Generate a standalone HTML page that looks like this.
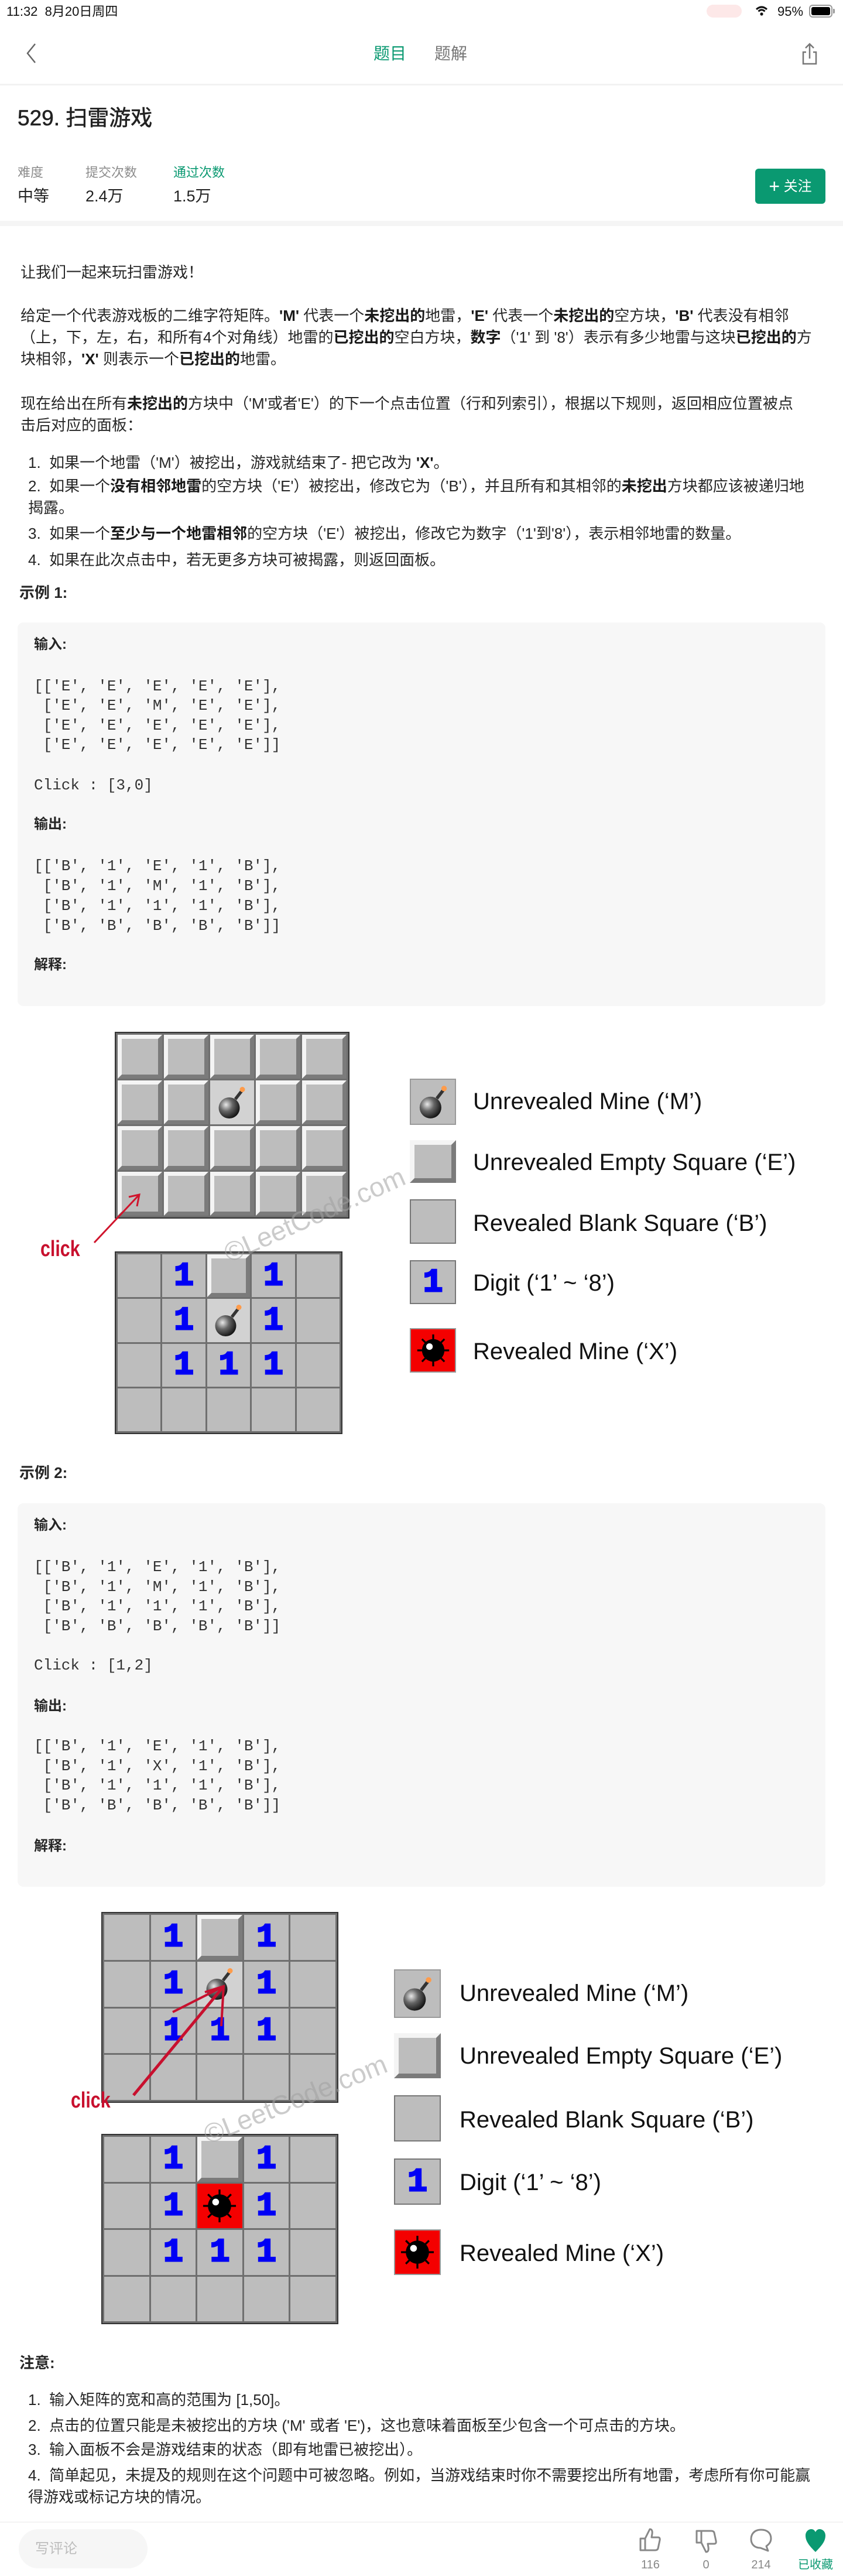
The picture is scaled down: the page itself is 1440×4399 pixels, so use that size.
<!DOCTYPE html>
<html lang="zh">
<head>
<meta charset="utf-8">
<style>
*{margin:0;padding:0;box-sizing:border-box}
html,body{width:1440px;height:4399px;background:#fff;overflow:hidden}
body{position:relative;font-family:"Liberation Sans","Noto Sans CJK SC",sans-serif;color:#262626}
.a{position:absolute;white-space:nowrap}
.t{font-size:26px;line-height:40px}
.p{font-size:26px;line-height:37px}
b{font-weight:bold;color:#1a1a1a}
.box{position:absolute;left:30px;width:1380px;background:#f7f7f7;border-radius:10px}
.lab{font-size:24px;font-weight:bold;line-height:40px;left:58px;color:#262626}
.code{font-family:"Liberation Mono","DejaVu Sans Mono",monospace;font-size:26px;left:58px;white-space:pre;color:#333}
.board{position:absolute;display:grid;background:#6f6f6f;gap:3px;padding:3px;border:2px solid #333}
.c{background:#bdbdbd;position:relative;display:flex;align-items:center;justify-content:center}
.icon{position:absolute;border:2px solid #9a9a9a;background:#bdbdbd;display:flex;align-items:center;justify-content:center}
.e{border:7px solid;border-color:#f4f4f4 #7b7b7b #7b7b7b #f4f4f4;background:#bdbdbd}
.m{background:#d2d2d2}
.x{background:#f40000}
.d{font-family:"Liberation Mono",monospace;font-weight:bold;font-size:56px;color:#0000f5;line-height:1;-webkit-text-stroke:3px #0000f5}
.lg{font-size:40px;line-height:50px;color:#111}
.click{color:#c8102e;font-size:38px;font-weight:bold;transform:scaleX(.8);transform-origin:left}
.wm{color:rgba(160,160,160,.55);font-size:46px;transform-origin:left center}
svg{display:block}
</style>
</head>
<body>

<div class="a" style="left:11px;top:6px;font-size:22px;line-height:28px;color:#111">11:32&nbsp;&nbsp;8月20日周四</div>
<div class="a" style="left:1207px;top:8px;width:60px;height:22px;border-radius:11px;background:#fde8e8"></div>
<svg class="a" style="left:1290px;top:9px" width="22" height="20" viewBox="0 0 22 20"><path d="M2 7 Q11 -1 20 7" stroke="#111" stroke-width="3" fill="none"/><path d="M5.5 10.5 Q11 5 16.5 10.5" stroke="#111" stroke-width="3" fill="none"/><circle cx="11" cy="15" r="2.6" fill="#111"/></svg>
<div class="a" style="left:1328px;top:6px;font-size:22px;line-height:28px;color:#111">95%</div>
<div class="a" style="left:1382px;top:8px;width:40px;height:22px;border:2px solid #999;border-radius:6px;padding:2px"><div style="width:100%;height:100%;background:#000;border-radius:3px"></div></div>
<div class="a" style="left:1423px;top:15px;width:3px;height:8px;background:#999;border-radius:0 2px 2px 0"></div>

<svg class="a" style="left:42px;top:72px" width="24" height="38" viewBox="0 0 24 38"><path d="M18 3 L5 19 L18 35" stroke="#666" stroke-width="2.5" fill="none"/></svg>
<div class="a" style="left:638px;top:74px;font-size:28px;line-height:36px;color:#0a9971">题目</div>
<div class="a" style="left:742px;top:74px;font-size:28px;line-height:36px;color:#777">题解</div>
<svg class="a" style="left:1368px;top:72px" width="30" height="40" viewBox="0 0 30 40"><path d="M15 28 V3 M8 10 L15 3 L22 10" stroke="#777" stroke-width="2.5" fill="none"/><path d="M9 17 H4 V37 H26 V17 H21" stroke="#777" stroke-width="2.5" fill="none"/></svg>
<div class="a" style="left:0;top:143px;width:1440px;height:3px;background:#f2f2f2"></div>

<div class="a" style="left:30px;top:180px;font-size:37px;line-height:44px;color:#222;-webkit-text-stroke:0.6px #222">529. 扫雷游戏</div>
<div class="a" style="left:30px;top:281px;font-size:22px;line-height:28px;color:#8c8c8c">难度</div>
<div class="a" style="left:146px;top:281px;font-size:22px;line-height:28px;color:#8c8c8c">提交次数</div>
<div class="a" style="left:296px;top:281px;font-size:22px;line-height:28px;color:#0a9971">通过次数</div>
<div class="a" style="left:30px;top:318px;font-size:27px;line-height:34px;color:#222">中等</div>
<div class="a" style="left:146px;top:318px;font-size:27px;line-height:34px;color:#222">2.4万</div>
<div class="a" style="left:296px;top:318px;font-size:27px;line-height:34px;color:#222">1.5万</div>
<div class="a" style="left:1290px;top:288px;width:120px;height:60px;background:#0a9971;border-radius:6px;color:#fff;font-size:24px;line-height:60px;text-align:center"><span style="font-size:32px;vertical-align:-3px">+</span> 关注</div>
<div class="a" style="left:0;top:377px;width:1440px;height:9px;background:#f5f5f5"></div>

<div class="a t" style="left:35px;top:445px">让我们一起来玩扫雷游戏！</div>
<div class="a p" style="left:35px;top:521px">给定一个代表游戏板的二维字符矩阵。<b>'M'</b> 代表一个<b>未挖出的</b>地雷，<b>'E'</b> 代表一个<b>未挖出的</b>空方块，<b>'B'</b> 代表没有相邻<br>（上，下，左，右，和所有4个对角线）地雷的<b>已挖出的</b>空白方块，<b>数字</b>（'1' 到 '8'）表示有多少地雷与这块<b>已挖出的</b>方<br>块相邻，<b>'X'</b> 则表示一个<b>已挖出的</b>地雷。</div>
<div class="a p" style="left:35px;top:671px">现在给出在所有<b>未挖出的</b>方块中（'M'或者'E'）的下一个点击位置（行和列索引），根据以下规则，返回相应位置被点<br>击后对应的面板：</div>
<div class="a t" style="left:48px;top:770px">1.&nbsp; 如果一个地雷（'M'）被挖出，游戏就结束了- 把它改为 <b>'X'</b>。</div>
<div class="a p" style="left:48px;top:812px">2.&nbsp; 如果一个<b>没有相邻地雷</b>的空方块（'E'）被挖出，修改它为（'B'），并且所有和其相邻的<b>未挖出</b>方块都应该被递归地<br>揭露。</div>
<div class="a t" style="left:48px;top:891px">3.&nbsp; 如果一个<b>至少与一个地雷相邻</b>的空方块（'E'）被挖出，修改它为数字（'1'到'8'），表示相邻地雷的数量。</div>
<div class="a t" style="left:48px;top:936px">4.&nbsp; 如果在此次点击中，若无更多方块可被揭露，则返回面板。</div>
<div class="a t" style="left:33px;top:992px;font-weight:bold">示例 1:</div>

<div class="box" style="top:1063px;height:655px"></div>
<div class="a lab" style="top:1081px">输入:</div>
<div class="a code" style="top:1156px;line-height:33.3px">[['E', 'E', 'E', 'E', 'E'],
 ['E', 'E', 'M', 'E', 'E'],
 ['E', 'E', 'E', 'E', 'E'],
 ['E', 'E', 'E', 'E', 'E']]</div>
<div class="a code" style="top:1324px;line-height:34px">Click : [3,0]</div>
<div class="a lab" style="top:1388px">输出:</div>
<div class="a code" style="top:1462px;line-height:34px">[['B', '1', 'E', '1', 'B'],
 ['B', '1', 'M', '1', 'B'],
 ['B', '1', '1', '1', 'B'],
 ['B', 'B', 'B', 'B', 'B']]</div>
<div class="a lab" style="top:1628px">解释:</div>

<div class="board" style="left:196px;top:1762px;width:401px;height:319px;grid-template-columns:repeat(5,1fr);grid-template-rows:repeat(4,1fr)">
<div class="c e"></div><div class="c e"></div><div class="c e"></div><div class="c e"></div><div class="c e"></div>
<div class="c e"></div><div class="c e"></div><div class="c m"><svg width="60" height="66" viewBox="0 0 40 44"><defs><radialGradient id="bg1" cx=".35" cy=".35" r=".7"><stop offset="0" stop-color="#e8e8e8"/><stop offset=".45" stop-color="#666"/><stop offset="1" stop-color="#111"/></radialGradient></defs><circle cx="17" cy="28" r="12" fill="url(#bg1)"/><path d="M24 18 L31 9" stroke="#333" stroke-width="3.5"/><circle cx="32" cy="7" r="3" fill="#ff9b4a"/></svg></div><div class="c e"></div><div class="c e"></div>
<div class="c e"></div><div class="c e"></div><div class="c e"></div><div class="c e"></div><div class="c e"></div>
<div class="c e"></div><div class="c e"></div><div class="c e"></div><div class="c e"></div><div class="c e"></div>
</div>
<div class="board" style="left:196px;top:2137px;width:389px;height:312px;grid-template-columns:repeat(5,1fr);grid-template-rows:repeat(4,1fr)">
<div class="c"></div><div class="c d">1</div><div class="c e"></div><div class="c d">1</div><div class="c"></div>
<div class="c"></div><div class="c d">1</div><div class="c m"><svg width="60" height="66" viewBox="0 0 40 44"><circle cx="17" cy="28" r="12" fill="url(#bg1)"/><path d="M24 18 L31 9" stroke="#333" stroke-width="3.5"/><circle cx="32" cy="7" r="3" fill="#ff9b4a"/></svg></div><div class="c d">1</div><div class="c"></div>
<div class="c"></div><div class="c d">1</div><div class="c d">1</div><div class="c d">1</div><div class="c"></div>
<div class="c"></div><div class="c"></div><div class="c"></div><div class="c"></div><div class="c"></div>
</div>
<div class="a click" style="left:69px;top:2112px">click</div>
<svg class="a" style="left:150px;top:2030px" width="100" height="100" viewBox="0 0 100 100"><path d="M11 92 L88 10 M70 14 L88 10 L84 30" stroke="#d0142c" stroke-width="3" fill="none"/></svg>
<div class="a wm" style="left:385px;top:2115px;transform:rotate(-24deg)">©LeetCode.com</div>

<div class="icon" style="left:700px;top:1842px;width:79px;height:79px"><svg width="62" height="68" viewBox="0 0 40 44"><circle cx="17" cy="28" r="12" fill="url(#bg1)"/><path d="M24 18 L31 9" stroke="#333" stroke-width="3.5"/><circle cx="32" cy="7" r="3" fill="#ff9b4a"/></svg></div>
<div class="icon e" style="left:700px;top:1947px;width:79px;height:73px;border-width:8px"></div>
<div class="icon" style="left:700px;top:2048px;width:79px;height:76px;border-color:#777"></div>
<div class="icon d" style="left:700px;top:2152px;width:79px;height:75px;border-color:#777">1</div>
<div class="icon x" style="left:700px;top:2268px;width:79px;height:76px;border-color:#999"><svg width="64" height="64" viewBox="0 0 40 40"><path d="M20 3V37M3 20H37M8 8L32 32M32 8L8 32" stroke="#000" stroke-width="2"/><circle cx="20" cy="20" r="12" fill="#000"/><circle cx="16" cy="16" r="3.5" fill="#fff"/></svg></div>
<div class="a lg" style="left:808px;top:1856px">Unrevealed Mine (‘M’)</div>
<div class="a lg" style="left:808px;top:1960px">Unrevealed Empty Square (‘E’)</div>
<div class="a lg" style="left:808px;top:2064px">Revealed Blank Square (‘B’)</div>
<div class="a lg" style="left:808px;top:2166px">Digit (‘1’ ~ ‘8’)</div>
<div class="a lg" style="left:808px;top:2283px">Revealed Mine (‘X’)</div>

<div class="a t" style="left:33px;top:2495px;font-weight:bold">示例 2:</div>

<div class="box" style="top:2567px;height:655px"></div>
<div class="a lab" style="top:2585px">输入:</div>
<div class="a code" style="top:2660px;line-height:33.5px">[['B', '1', 'E', '1', 'B'],
 ['B', '1', 'M', '1', 'B'],
 ['B', '1', '1', '1', 'B'],
 ['B', 'B', 'B', 'B', 'B']]</div>
<div class="a code" style="top:2827px;line-height:34px">Click : [1,2]</div>
<div class="a lab" style="top:2894px">输出:</div>
<div class="a code" style="top:2966px;line-height:33.7px">[['B', '1', 'E', '1', 'B'],
 ['B', '1', 'X', '1', 'B'],
 ['B', '1', '1', '1', 'B'],
 ['B', 'B', 'B', 'B', 'B']]</div>
<div class="a lab" style="top:3133px">解释:</div>

<div class="board" style="left:173px;top:3265px;width:405px;height:326px;grid-template-columns:repeat(5,1fr);grid-template-rows:repeat(4,1fr)">
<div class="c"></div><div class="c d">1</div><div class="c e"></div><div class="c d">1</div><div class="c"></div>
<div class="c"></div><div class="c d">1</div><div class="c m"><svg width="60" height="66" viewBox="0 0 40 44"><circle cx="17" cy="28" r="12" fill="url(#bg1)"/><path d="M24 18 L31 9" stroke="#333" stroke-width="3.5"/><circle cx="32" cy="7" r="3" fill="#ff9b4a"/></svg></div><div class="c d">1</div><div class="c"></div>
<div class="c"></div><div class="c d">1</div><div class="c d">1</div><div class="c d">1</div><div class="c"></div>
<div class="c"></div><div class="c"></div><div class="c"></div><div class="c"></div><div class="c"></div>
</div>
<svg class="a" style="left:200px;top:3370px" width="200" height="240" viewBox="0 0 200 240"><path d="M28 208 L182 22" stroke="#c8102e" stroke-width="5" fill="none"/><path d="M150 32 L182 22 L178 90 M182 22 L95 66" stroke="#c8102e" stroke-width="4" fill="none"/></svg>
<div class="a click" style="left:121px;top:3566px">click</div>
<div class="board" style="left:173px;top:3644px;width:405px;height:325px;grid-template-columns:repeat(5,1fr);grid-template-rows:repeat(4,1fr)">
<div class="c"></div><div class="c d">1</div><div class="c e"></div><div class="c d">1</div><div class="c"></div>
<div class="c"></div><div class="c d">1</div><div class="c x"><svg width="66" height="66" viewBox="0 0 40 40"><path d="M20 3V37M3 20H37M8 8L32 32M32 8L8 32" stroke="#000" stroke-width="2"/><circle cx="20" cy="20" r="12" fill="#000"/><circle cx="16" cy="16" r="3.5" fill="#fff"/></svg></div><div class="c d">1</div><div class="c"></div>
<div class="c"></div><div class="c d">1</div><div class="c d">1</div><div class="c d">1</div><div class="c"></div>
<div class="c"></div><div class="c"></div><div class="c"></div><div class="c"></div><div class="c"></div>
</div>
<div class="a wm" style="left:350px;top:3620px;transform:rotate(-22deg)">©LeetCode.com</div>

<div class="icon" style="left:673px;top:3363px;width:80px;height:83px"><svg width="64" height="70" viewBox="0 0 40 44"><circle cx="17" cy="28" r="12" fill="url(#bg1)"/><path d="M24 18 L31 9" stroke="#333" stroke-width="3.5"/><circle cx="32" cy="7" r="3" fill="#ff9b4a"/></svg></div>
<div class="icon e" style="left:673px;top:3472px;width:80px;height:77px;border-width:8px"></div>
<div class="icon" style="left:673px;top:3578px;width:80px;height:79px;border-color:#777"></div>
<div class="icon d" style="left:673px;top:3686px;width:80px;height:79px;border-color:#777">1</div>
<div class="icon x" style="left:673px;top:3807px;width:80px;height:78px;border-color:#999"><svg width="66" height="66" viewBox="0 0 40 40"><path d="M20 3V37M3 20H37M8 8L32 32M32 8L8 32" stroke="#000" stroke-width="2"/><circle cx="20" cy="20" r="12" fill="#000"/><circle cx="16" cy="16" r="3.5" fill="#fff"/></svg></div>
<div class="a lg" style="left:785px;top:3379px">Unrevealed Mine (‘M’)</div>
<div class="a lg" style="left:785px;top:3486px">Unrevealed Empty Square (‘E’)</div>
<div class="a lg" style="left:785px;top:3595px">Revealed Blank Square (‘B’)</div>
<div class="a lg" style="left:785px;top:3702px">Digit (‘1’ ~ ‘8’)</div>
<div class="a lg" style="left:785px;top:3823px">Revealed Mine (‘X’)</div>

<div class="a t" style="left:33px;top:4015px;font-weight:bold">注意:</div>
<div class="a t" style="left:48px;top:4078px">1.&nbsp; 输入矩阵的宽和高的范围为 [1,50]。</div>
<div class="a t" style="left:48px;top:4122px">2.&nbsp; 点击的位置只能是未被挖出的方块 ('M' 或者 'E')，这也意味着面板至少包含一个可点击的方块。</div>
<div class="a t" style="left:48px;top:4163px">3.&nbsp; 输入面板不会是游戏结束的状态（即有地雷已被挖出）。</div>
<div class="a p" style="left:48px;top:4209px">4.&nbsp; 简单起见，未提及的规则在这个问题中可被忽略。例如，当游戏结束时你不需要挖出所有地雷，考虑所有你可能赢<br>得游戏或标记方块的情况。</div>

<div class="a" style="left:0;top:4306px;width:1440px;height:2px;background:#f3f3f3"></div>
<div class="a" style="left:32px;top:4319px;width:220px;height:67px;border-radius:34px;background:#f6f6f6;color:#bdbdbd;font-size:24px;line-height:67px;padding-left:28px">写评论</div>
<svg class="a" style="left:1090px;top:4315px" width="40" height="44" viewBox="0 0 40 44"><path d="M4 20 H12 V40 H4 Z M12 20 L20 4 Q25 4 24 12 L23 18 H34 Q38 18 37 23 L34 37 Q33 40 29 40 H12" stroke="#888" stroke-width="3" fill="none" stroke-linejoin="round"/></svg>
<svg class="a" style="left:1186px;top:4318px" width="40" height="44" viewBox="0 0 40 44"><path d="M4 4 H12 V24 H4 Z M12 24 L20 40 Q25 40 24 32 L23 26 H34 Q38 26 37 21 L34 7 Q33 4 29 4 H12" stroke="#888" stroke-width="3" fill="none" stroke-linejoin="round"/></svg>
<svg class="a" style="left:1279px;top:4316px" width="42" height="44" viewBox="0 0 42 44"><path d="M21 4 C8 4 4 13 4 20 C4 29 10 35 20 35 L33 40 L30 32 C36 28 38 24 38 19 C38 10 32 4 21 4 Z" stroke="#888" stroke-width="3" fill="none" stroke-linejoin="round"/></svg>
<svg class="a" style="left:1373px;top:4316px" width="40" height="44" viewBox="0 0 40 44"><path d="M20 42 C10 32 3 24 3 14 C3 7 8 3 13 3 C17 3 19 6 20 8 C21 6 23 3 27 3 C32 3 37 7 37 14 C37 24 30 32 20 42 Z" fill="#0a9971"/></svg>
<div class="a" style="left:1091px;top:4368px;width:40px;text-align:center;font-size:20px;line-height:24px;color:#888">116</div>
<div class="a" style="left:1186px;top:4368px;width:40px;text-align:center;font-size:20px;line-height:24px;color:#888">0</div>
<div class="a" style="left:1280px;top:4368px;width:40px;text-align:center;font-size:20px;line-height:24px;color:#888">214</div>
<div class="a" style="left:1363px;top:4368px;width:60px;text-align:center;font-size:20px;line-height:24px;color:#0a9971">已收藏</div>
</body>
</html>
